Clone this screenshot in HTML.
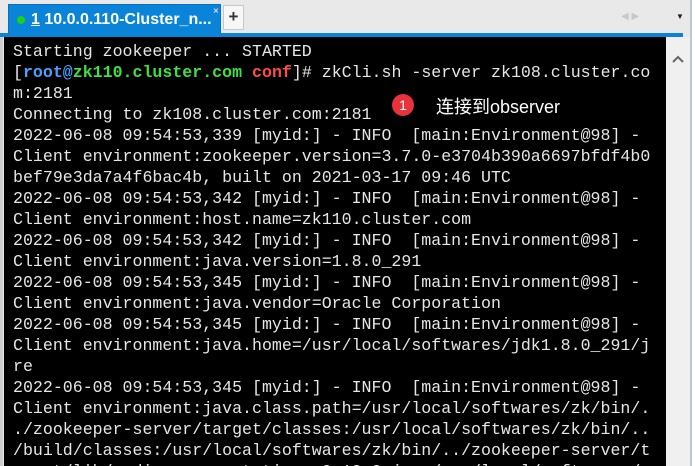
<!DOCTYPE html><html><head><meta charset="utf-8"><style>
html,body{margin:0;width:695px;height:466px;overflow:hidden}
body{background:#e9e9e9;position:relative;font-family:"Liberation Sans",sans-serif}
.tab{position:absolute;left:8px;top:4px;width:213px;height:30px;background:#0a84d8;border:1px solid #0a6fc0;box-sizing:border-box;color:#fff;font-weight:bold;font-size:16px;line-height:30px}
.dot{position:absolute;left:8px;top:11px;width:8px;height:8px;border-radius:50%;background:#1bd11b}
.plus{position:absolute;left:223px;top:5px;width:21px;height:25px;background:#f7f7f7;border:1px solid #c8c8c8;box-sizing:border-box;text-align:center;font-size:17px;font-weight:bold;line-height:22px;color:#333}
.band{position:absolute;left:0;top:33px;width:683px;height:4px;background:#0a84d8}
.term{position:absolute;left:4px;top:37px;width:662px;height:429px;background:#000}
.lb{position:absolute;left:0;top:37px;width:3px;height:429px;background:#cfcfcf}
.sb{position:absolute;left:666px;top:37px;width:24px;height:429px;background:#f0f0f0}
.rb{position:absolute;left:690px;top:0;width:2px;height:466px;background:#b8c8d8}
.rw{position:absolute;left:692px;top:0;width:3px;height:466px;background:#fff}
pre{position:absolute;left:13px;top:41px;margin:0;font-family:"Liberation Mono",monospace;font-size:16.6px;line-height:21px;color:#e6e6e6;height:425px;overflow:hidden}
.b{color:#4aa0ff;font-weight:bold}.g{color:#3ee03e;font-weight:bold}.r{color:#ff4b4b;font-weight:bold}
.badge{position:absolute;left:392px;top:94px;width:22px;height:22px;border-radius:50%;background:#e8323c;color:#fff;font-size:14px;text-align:center;line-height:22px}
.note{position:absolute;left:436px;top:93px;color:#fff;font-size:18px;font-family:"Liberation Sans","Noto Sans CJK SC",sans-serif}
</style></head><body>
<div class="tab"><span class="dot"></span><span style="position:absolute;left:22px"><u>1</u> 10.0.0.110-Cluster_n...</span><span style="position:absolute;left:204px;top:-8px;font-size:10px;font-weight:normal">×</span></div>
<div class="plus">+</div>
<div style="position:absolute;left:621px;top:11px;color:#c8c8c8;font-size:10px">◀ ▶</div>
<div style="position:absolute;left:676px;top:12px;color:#222;font-size:8px">▼</div>
<div class="band"></div><div class="lb"></div>
<div class="term"></div>
<div class="sb"><svg width="24" height="20" style="position:absolute;top:12px"><path d="M7 13 L12 8 L17 13" stroke="#666" stroke-width="2" fill="none"/></svg></div>
<div class="rb"></div><div class="rw"></div>
<pre>Starting zookeeper ... STARTED
[<span class="b">root@</span><span class="g">zk110.cluster.com</span> <span class="r">conf</span>]# zkCli.sh -server zk108.cluster.co
m:2181
Connecting to zk108.cluster.com:2181
2022-06-08 09:54:53,339 [myid:] - INFO  [main:Environment@98] -
Client environment:zookeeper.version=3.7.0-e3704b390a6697bfdf4b0
bef79e3da7a4f6bac4b, built on 2021-03-17 09:46 UTC
2022-06-08 09:54:53,342 [myid:] - INFO  [main:Environment@98] -
Client environment:host.name=zk110.cluster.com
2022-06-08 09:54:53,342 [myid:] - INFO  [main:Environment@98] -
Client environment:java.version=1.8.0_291
2022-06-08 09:54:53,345 [myid:] - INFO  [main:Environment@98] -
Client environment:java.vendor=Oracle Corporation
2022-06-08 09:54:53,345 [myid:] - INFO  [main:Environment@98] -
Client environment:java.home=/usr/local/softwares/jdk1.8.0_291/j
re
2022-06-08 09:54:53,345 [myid:] - INFO  [main:Environment@98] -
Client environment:java.class.path=/usr/local/softwares/zk/bin/.
./zookeeper-server/target/classes:/usr/local/softwares/zk/bin/..
/build/classes:/usr/local/softwares/zk/bin/../zookeeper-server/t
arget/lib/audience-annotations-0.12.0.jar:/usr/local/softwares/z</pre>
<div class="badge">1</div><div class="note">连接到observer</div>
</body></html>
